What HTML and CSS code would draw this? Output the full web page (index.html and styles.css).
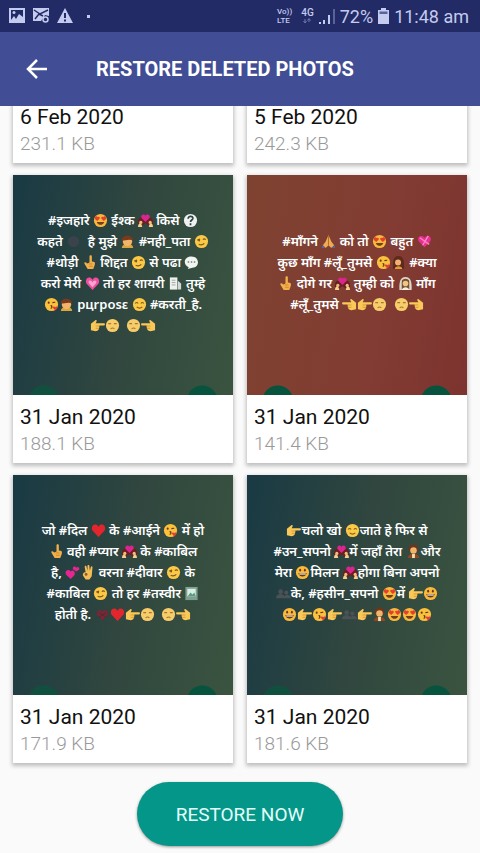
FILE: index.html
```html
<!DOCTYPE html>
<html lang="en">

<head>
    <meta charset="UTF-8">
    <meta name="viewport" content="width=device-width, initial-scale=1">
    <title>Restore Deleted Photos</title>
    <link rel="stylesheet" href="styles.css">
</head>

<body>
    <!-- emoji set used in the photo captions -->
    <svg class="sprite" aria-hidden="true">
        <symbol id="love" viewBox="0 0 16 16">
            <circle cx="8" cy="8" r="7" fill="#f8b83c" />
            <path d="M2 4.500c1-2 3-1 3 0 1-1 3 0 2 1.500L4.500 8.500 2 6.500zM14 4.500c-1-2-3-1-3 0-1-1-3 0-2 1.500l2.500 2.500L14 6.500z" fill="#e5402e" />
            <path d="M4 9.500h8c-1 4-7 4-8 0z" fill="#70401c" />
        </symbol>
        <symbol id="wink" viewBox="0 0 16 16">
            <circle cx="8" cy="8" r="7" fill="#fbc945" />
            <path d="M3.500 6.500l3-1M9.500 6c1-1 2-1 3 0M5 11c2 1 4 1 6-1" fill="none" stroke="#7c5420" stroke-width="1.300" />
            <circle cx="5.500" cy="7" r="1" fill="#7c5420" />
        </symbol>
        <symbol id="smile" viewBox="0 0 16 16">
            <circle cx="8" cy="8" r="7" fill="#fbc945" />
            <path d="M3.500 7c.8-1.500 2.200-1.500 3 0M9.500 7c.8-1.500 2.200-1.500 3 0M5 10.500c2 1.800 4 1.800 6 0" fill="none" stroke="#8a5a20" stroke-width="1.200" />
        </symbol>
        <symbol id="pale" viewBox="0 0 16 16">
            <circle cx="8" cy="8" r="7" fill="#f6cd6a" />
            <path d="M3.500 6h3M9.500 6h3M6 11.500c1.500-1 3-1 4 0" fill="none" stroke="#a8762c" stroke-width="1.200" />
        </symbol>
        <symbol id="grin" viewBox="0 0 16 16">
            <circle cx="8" cy="8" r="7" fill="#fbb93a" />
            <ellipse cx="5.500" cy="5.500" rx="1" ry="1.500" fill="#63381a" />
            <ellipse cx="10.500" cy="5.500" rx="1" ry="1.500" fill="#63381a" />
            <path d="M3.500 8.500h9c-1 5-8 5-9 0z" fill="#63381a" />
            <path d="M4.500 9h7v1.200h-7z" fill="#fff" />
        </symbol>
        <symbol id="kiss" viewBox="0 0 16 16">
            <circle cx="8" cy="8" r="7" fill="#fbc03c" />
            <circle cx="5" cy="6" r="1.100" fill="#63381a" />
            <path d="M9 6l3-.5M7 9c2 0 2 1.200.5 1.500 1.500.3 1.500 1.500-.5 1.500" fill="none" stroke="#63381a" stroke-width="1.100" />
            <path d="M12 14.500l-2.500-3c0-1.800 2-1.800 2.500-.5.500-1.300 3-1.300 2.500.5z" fill="#e23b3b" />
        </symbol>
        <symbol id="couple" viewBox="0 0 16 16">
            <path d="M0 12c-1-6 3-9 6-6l2 3 2-3c3-3 7 0 6 6l-3 2-5-3-5 3z" fill="#6b2020" />
            <path d="M0 15c0-5 4-6 4.500 0zM11.500 15c.5-6 4.500-5 4.500 0z" fill="#f3d08c" />
            <circle cx="3" cy="10" r="1.700" fill="#f0bd80" />
            <circle cx="13" cy="10" r="1.700" fill="#f0bd80" />
            <path d="M8 9.500L3.500 5C3 1 7 .5 8 3c1-2.500 5-2 4.500 2z" fill="#d92590" />
        </symbol>
        <symbol id="question" viewBox="0 0 16 16">
            <circle cx="8" cy="8" r="7" fill="#eef1ee" />
            <path d="M5.500 6c0-3.500 5.500-3 5 0-.3 1.500-2.500 1.500-2.500 3.500M8 11v2" fill="none" stroke="#2b4144" stroke-width="1.800" />
        </symbol>
        <symbol id="moon" viewBox="0 0 16 16">
            <circle cx="8" cy="8" r="6" fill="#3a434c" />
        </symbol>
        <symbol id="boy" viewBox="0 0 16 16">
            <path d="M2 15c0-6 12-6 12 0z" fill="#d9a83c" />
            <circle cx="8" cy="8" r="5" fill="#f2b36b" />
            <path d="M2 7C1 0 14 0 14 7c-4-2-8 0-12 0z" fill="#7a3b1c" />
        </symbol>
        <symbol id="woman" viewBox="0 0 16 16">
            <path d="M2 15C2 7 2 1 8 1s6 6 6 14z" fill="#5e2a1b" />
            <circle cx="7.500" cy="8" r="3.200" fill="#f0b274" />
            <path d="M4 15c0-4 8-4 8 0z" fill="#e39a3a" />
        </symbol>
        <symbol id="bride" viewBox="0 0 16 16">
            <path d="M1.500 15C1 5 3 1 8 1s7 4 6.500 14z" fill="#dcd8cb" />
            <path d="M4 14V6c0-4 8-4 8 0v8z" fill="#75512d" />
            <circle cx="8" cy="8" r="3" fill="#f3c487" />
            <path d="M4 15c1-4 7-4 8 0z" fill="#f4efdf" />
        </symbol>
        <symbol id="up" viewBox="0 0 16 16">
            <path d="M8 1.500c0-1.500 2.500-1.500 2.500 0V7c3 0 4 1 3 4l-1.500 4H6L2.500 9c0-2 1.500-1.500 3 0l2.500-1z" fill="#f3b04a" />
            <path d="M7 9.500h4M7.500 12h4" stroke="#c47c26" stroke-width=".8" />
        </symbol>
        <symbol id="right" viewBox="0 0 16 16">
            <path d="M15 5.500c1.200 0 1.200 2.500 0 2.500h-5c0 4-1 6-4 6-2 0-3-1-5-1V6l5-4c2 0 1 2 0 3.500z" fill="#fac858" />
            <path d="M6 8.500h4M6 11h3.500" stroke="#cf8b2b" stroke-width=".8" />
        </symbol>
        <symbol id="left" viewBox="0 0 16 16">
            <path d="M1 5.500C-.2 5.500-.2 8 1 8h5c0 4 1 6 4 6 2 0 3-1 5-1V6l-5-4c-2 0-1 2 0 3.500z" fill="#fac858" />
            <path d="M10 8.500H6M10 11H6.500" stroke="#cf8b2b" stroke-width=".8" />
        </symbol>
        <symbol id="chat" viewBox="0 0 16 16">
            <path d="M8 1.500c9 0 9 12 1 12l-5 1.500 1-2C-1 11-1 1.500 8 1.500z" fill="#f1f4f1" />
            <path d="M4 7.500h1.500M7.300 7.500h1.500M10.500 7.500H12" stroke="#6d7c7b" stroke-width="1.500" />
        </symbol>
        <symbol id="pink-heart" viewBox="0 0 16 16">
            <path d="M8 15L1.500 8C-1 3 5-1 8 4c3-5 9-1 6.500 4z" fill="#f04fa0" />
            <path d="M8 12L4 7.500C3 4 7 4 8 7c1-3 5-3 4 .5z" fill="#f9a4cf" />
        </symbol>
        <symbol id="ribbon-heart" viewBox="0 0 16 16">
            <path d="M8 14L2 8C-1 3 5 0 8 4c3-4 9-1 6 4z" fill="#e92f93" />
            <path d="M3 4l10 7M12 2L6 12" stroke="#f887c1" stroke-width="1.500" />
        </symbol>
        <symbol id="red-heart" viewBox="0 0 16 16">
            <path d="M8 15L1.500 8C-1 3 5-1 8 4c3-5 9-1 6.500 4z" fill="#e3262d" />
        </symbol>
        <symbol id="two-hearts" viewBox="0 0 16 16">
            <path d="M6 15L1 10c-2-5 4-6 5-3 2-3 6 0 4 4z" fill="#e62591" />
            <path d="M12 7L8.500 4.500c-1-3 2.500-4 3.500-1.500 2-2 4 .5 3 2z" fill="#e62591" />
        </symbol>
        <symbol id="rose" viewBox="0 0 16 16">
            <path d="M8 14L2 8c-1-4 4-6 6-3 2-3 7-1 6 3z" fill="#7b2634" />
            <path d="M4 6l8 5M12 6l-8 5" stroke="#4c2c35" />
        </symbol>
        <symbol id="page" viewBox="0 0 16 16">
            <path d="M2 1.500h8v13H2z" fill="#eef0ee" />
            <path d="M10.500 5l3.500 3v6.500h-3.500z" fill="#cfd6d3" />
            <path d="M4 4.500h4M4 7h4M4 9.500h4" stroke="#9aa5a2" />
        </symbol>
        <symbol id="frame" viewBox="0 0 16 16">
            <path d="M1.500 1h13v14h-13z" fill="#7fa08d" />
            <path d="M3.500 3h9v8h-9z" fill="#d8eee6" />
            <path d="M4 11l3-4 2 2 2-2 1.500 4z" fill="#5c9c83" />
        </symbol>
        <symbol id="pray" viewBox="0 0 16 16">
            <path d="M8 1l3 7 3 4-3 3-3-3-3 3-3-3 3-4z" fill="#edab52" />
            <path d="M8 2v10" stroke="#b36c26" />
            <path d="M1 12l4 3H1zM15 12l-4 3h4z" fill="#5267a5" />
        </symbol>
        <symbol id="ok" viewBox="0 0 16 16">
            <path d="M6 8L5 2c0-1.500 2-1.500 2 0l1 4V1c0-1.500 2-1.500 2 0l.5 5 1-4c.3-1 2-.8 1.800.4L12.500 12 10 15.500H6L3 11c0-3 2-4 3-3z" fill="#f5bd55" />
            <circle cx="6.500" cy="10" r="1.500" fill="#8a5a25" />
        </symbol>
        <symbol id="busts" viewBox="0 0 16 16">
            <circle cx="5" cy="6" r="2.500" fill="#4b5155" />
            <circle cx="11" cy="7" r="2.300" fill="#4b5155" />
            <path d="M0 13c0-6 9-6 10 0zM8 13c0-5 8-5 8 0z" fill="#4b5155" />
        </symbol>
        <symbol id="man" viewBox="0 0 16 16">
            <path d="M3 5c0-6 10-6 10 0v3H3z" fill="#6c351f" />
            <circle cx="8" cy="7" r="3.500" fill="#f0b566" />
            <path d="M2 15c0-6 12-6 12 0z" fill="#90461f" />
            <path d="M6.500 10.500h3V15h-3z" fill="#f6dfae" />
        </symbol>
    </svg>

    <div class="status-bar">
        <div class="status-left">
            <svg class="status-icon" viewBox="0 0 16 16">
                <path fill-rule="evenodd" d="M0 0h16v15H0zM2 2v10l3-4 2 3 3-5 4 3V2z" fill="#c3cbef" />
                <circle cx="5" cy="4.500" r="1.500" fill="#c3cbef" />
            </svg>
            <svg class="status-icon" viewBox="0 0 16 16">
                <path d="M0 0h16v8l-4-1-4 6H0z" fill="#c3cbef" />
                <path d="M1 2l6 4 8-4M2 11l4-5 4 2" fill="none" stroke="#232b66" stroke-width="1.500" />
                <circle cx="12.500" cy="11.500" r="2.500" fill="#232b66" stroke="#c3cbef" stroke-width="1.500" />
            </svg>
            <svg class="status-icon" viewBox="0 0 16 16">
                <path d="M8 0l8 15H0z" fill="#c3cbef" />
                <path d="M8 5v5M8 11.500v2" stroke="#232b66" stroke-width="2" />
            </svg>
            <span class="dot"></span>
        </div>
        <div class="status-right">
            <span class="volte"><span>Vo))</span><span>LTE</span></span>
            <span class="network">4G<svg class="arrows" viewBox="0 0 10 6">
                    <path d="M3 1v3M7 1v3M1.500 3L3 5l1.500-2M5.500 2.500L7 .5l1.500 2" fill="none" stroke="#6f79ad" />
                </svg></span>
            <svg class="signal" viewBox="0 0 16 16">
                <path d="M0 16v-2h2v2zM4 16v-4h2v4zM9 16V7h2v9z" fill="#c3cbef" />
                <path d="M14 16V1h2v15z" fill="#59639b" />
            </svg>
            <span>72%</span>
            <svg class="battery" viewBox="0 0 11 16">
                <path d="M3 0h5v2h3v14H0V2h3z" fill="#c3cbef" />
                <path d="M1.500 3.500h8V6h-8z" fill="#59639b" />
            </svg>
            <span>11:48 am</span>
        </div>
    </div>

    <header class="app-bar">
        <button class="back" type="button" aria-label="Back">
            <svg viewBox="0 0 22 20">
                <path d="M21 10H2M11 1l-9 9 9 9" fill="none" stroke="#fff" stroke-width="2.500" />
            </svg>
        </button>
        <h1>RESTORE DELETED PHOTOS</h1>
    </header>

    <main class="photos">
        <article class="card">
            <div class="photo"></div>
            <div class="info">
                <div class="date">6 Feb 2020</div>
                <div class="size">231.1 KB</div>
            </div>
        </article>
        <article class="card">
            <div class="photo"></div>
            <div class="info">
                <div class="date">5 Feb 2020</div>
                <div class="size">242.3 KB</div>
            </div>
        </article>

        <article class="card">
            <div class="photo" lang="hi">
                <p>#इजहारे <svg><use href="#love" /></svg> ईश्क <svg><use href="#couple" /></svg> किसे <svg><use href="#question" /></svg></p>
                <p>कहते <svg><use href="#moon" /></svg>&nbsp; है मुझे <svg><use href="#boy" /></svg> #नही_पता <svg><use href="#wink" /></svg></p>
                <p>#थोड़ी <svg><use href="#up" /></svg> शिद्दत <svg><use href="#wink" /></svg> से पढा <svg><use href="#chat" /></svg></p>
                <p>करो मेरी <svg><use href="#pink-heart" /></svg> तो हर शायरी <svg><use href="#page" /></svg> तुम्हे</p>
                <p><svg><use href="#kiss" /></svg><svg><use href="#boy" /></svg> pцrposε <svg><use href="#smile" /></svg> #करती_है.</p>
                <p><svg><use href="#right" /></svg><svg><use href="#pale" /></svg>&nbsp; <svg><use href="#pale" /></svg><svg><use href="#left" /></svg></p>
            </div>
            <div class="info">
                <div class="date">31 Jan 2020</div>
                <div class="size">188.1 KB</div>
            </div>
        </article>
        <article class="card">
            <div class="photo red" lang="hi">
                <p>#माँगने <svg><use href="#pray" /></svg> को तो <svg><use href="#love" /></svg> बहुत <svg><use href="#ribbon-heart" /></svg></p>
                <p>कुछ माँग #लूँ_तुमसे <svg><use href="#kiss" /></svg><svg><use href="#woman" /></svg> #क्या</p>
                <p><svg><use href="#up" /></svg> दोगे गर <svg><use href="#couple" /></svg> तुम्ही को <svg><use href="#bride" /></svg> माँग</p>
                <p>#लूँ_तुमसे <svg><use href="#left" /></svg><svg><use href="#right" /></svg><svg><use href="#pale" /></svg>&nbsp; <svg><use href="#pale" /></svg><svg><use href="#left" /></svg></p>
            </div>
            <div class="info">
                <div class="date">31 Jan 2020</div>
                <div class="size">141.4 KB</div>
            </div>
        </article>

        <article class="card">
            <div class="photo" lang="hi">
                <p>जो #दिल <svg><use href="#red-heart" /></svg> के #आईने <svg><use href="#kiss" /></svg> में हो</p>
                <p><svg><use href="#up" /></svg> वही #प्यार <svg><use href="#couple" /></svg> के #काबिल</p>
                <p>है, <svg><use href="#two-hearts" /></svg><svg><use href="#ok" /></svg> वरना #दीवार <svg><use href="#wink" /></svg> के</p>
                <p>#काबिल <svg><use href="#wink" /></svg> तो हर #तस्वीर <svg><use href="#frame" /></svg></p>
                <p>होती है. <svg><use href="#rose" /></svg><svg><use href="#red-heart" /></svg><svg><use href="#right" /></svg><svg><use href="#pale" /></svg>&nbsp; <svg><use href="#pale" /></svg><svg><use href="#left" /></svg></p>
            </div>
            <div class="info">
                <div class="date">31 Jan 2020</div>
                <div class="size">171.9 KB</div>
            </div>
        </article>
        <article class="card">
            <div class="photo" lang="hi">
                <p><svg><use href="#right" /></svg>चलो खो <svg><use href="#smile" /></svg>जाते हे फिर से</p>
                <p>#उन_सपनो <svg><use href="#couple" /></svg>में जहाँ तेरा <svg><use href="#man" /></svg>और</p>
                <p>मेरा <svg><use href="#grin" /></svg>मिलन <svg><use href="#couple" /></svg>होगा बिना अपनो</p>
                <p><svg><use href="#busts" /></svg>के, #हसीन_सपनो <svg><use href="#love" /></svg>में <svg><use href="#right" /></svg><svg><use href="#grin" /></svg></p>
                <p><svg><use href="#grin" /></svg><svg><use href="#right" /></svg><svg><use href="#kiss" /></svg><svg><use href="#right" /></svg><svg><use href="#busts" /></svg><svg><use href="#right" /></svg><svg><use href="#man" /></svg><svg><use href="#love" /></svg><svg><use href="#love" /></svg><svg><use href="#kiss" /></svg></p>
            </div>
            <div class="info">
                <div class="date">31 Jan 2020</div>
                <div class="size">181.6 KB</div>
            </div>
        </article>
    </main>

    <footer class="actions">
        <button class="restore" type="button">RESTORE NOW</button>
    </footer>
</body>

</html>
```
FILE: styles.css
```css
* {
    box-sizing: border-box;
}

body {
    margin: 0;
    height: 100vh;
    display: flex;
    flex-direction: column;
    overflow: hidden;
    background: #fafafa;
    font-family: Roboto, "Noto Sans", sans-serif;
}

.sprite {
    display: none;
}

/* status bar */
.status-bar {
    flex: none;
    height: 32px;
    padding: 0 11px 0 9px;
    display: flex;
    justify-content: space-between;
    align-items: center;
    background: #232b66;
    color: #c3cbef;
    font-size: 18px;
}

.status-left,
.status-right {
    display: flex;
    align-items: center;
}

.status-left {
    gap: 8px;
}

.status-right {
    gap: 5px;
}

.status-icon {
    width: 16px;
    height: 16px;
}

.dot {
    width: 3px;
    height: 3px;
    margin-left: 6px;
    background: #c3cbef;
}

.volte {
    display: flex;
    flex-direction: column;
    margin-right: 4px;
    font-size: 8px;
    line-height: 9px;
    font-weight: 500;
}

.network {
    display: flex;
    flex-direction: column;
    align-items: center;
    font-size: 10px;
    line-height: 10px;
    font-weight: 500;
}

.arrows {
    width: 10px;
    height: 6px;
}

.signal {
    width: 16px;
    height: 16px;
}

.battery {
    width: 11px;
    height: 16px;
}

/* app bar */
.app-bar {
    flex: none;
    height: 74px;
    padding: 0 26px;
    display: flex;
    align-items: center;
    gap: 48px;
    background: #414e95;
    color: #fff;
}

.app-bar h1 {
    margin: 0;
    font-size: 20px;
    font-weight: 700;
}

.back {
    width: 22px;
    height: 20px;
    padding: 0;
    border: 0;
    background: none;
}

.back svg {
    display: block;
}

/* photo list, scrolled to its end */
.photos {
    flex: 1;
    min-height: 0;
    padding: 0 13px 7px;
    display: grid;
    grid-template-columns: 1fr 1fr;
    gap: 12px 14px;
    align-content: end;
    overflow: hidden;
}

.card {
    background: #fff;
    box-shadow: 0 2px 4px 1px rgba(0, 0, 0, 0.24);
}

.photo {
    aspect-ratio: 1;
    padding-bottom: 25px;
    display: flex;
    flex-direction: column;
    justify-content: center;
    background:
        radial-gradient(circle 16px at 14% calc(100% + 6px), #11503f 15px, transparent 16px),
        radial-gradient(circle 16px at 86% calc(100% + 6px), #07533e 15px, transparent 16px),
        linear-gradient(100deg, #193a44, #30463f 50%, #3a5440);
    color: #fff;
    font-family: "Noto Sans", "Noto Sans Devanagari", sans-serif;
    font-size: 13px;
    font-weight: 600;
    line-height: 21px;
    text-align: center;
    white-space: nowrap;
}

.photo.red {
    background:
        radial-gradient(circle 16px at 14% calc(100% + 6px), #07533e 15px, transparent 16px),
        radial-gradient(circle 16px at 86% calc(100% + 6px), #07533e 15px, transparent 16px),
        linear-gradient(100deg, #7e4230, #823c33 60%, #7d332f);
}

.photo p {
    margin: 0;
}

.photo svg {
    width: 15px;
    height: 15px;
    vertical-align: -3px;
}

.info {
    padding: 10px 7px 6px;
}

.date {
    color: #111;
    font-size: 21px;
    line-height: 25px;
}

.size {
    color: #999;
    font-size: 19px;
    font-weight: 300;
    line-height: 27px;
}

/* bottom button */
.actions {
    flex: none;
    display: flex;
    justify-content: center;
    padding: 12px 0 7px;
}

.restore {
    height: 64px;
    padding: 0 39px;
    border: 0;
    border-radius: 32px;
    background: #049688;
    box-shadow: 0 1px 3px rgba(0, 0, 0, 0.4);
    color: #e4fffb;
    font-family: inherit;
    font-size: 19px;
}
```
